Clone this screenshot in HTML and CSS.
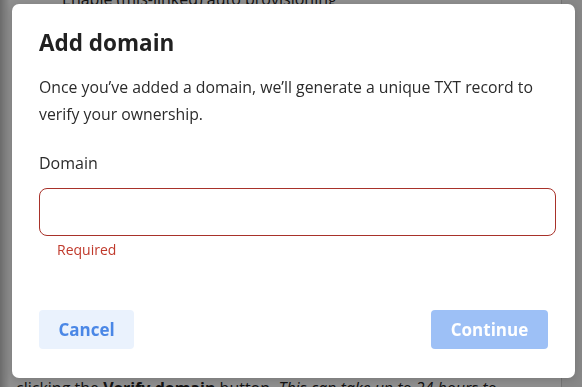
FILE: index.html
```html
<!DOCTYPE html>
<html>
<head>
<meta charset="utf-8">
<link rel="stylesheet" href="styles.css">
</head>
<body>
<div class="page">
  <div class="card">
    <p class="bg-top">Enable (mis-linked) auto provisioning</p>
    <div class="bg-spacer"></div>
    <p class="bg-bottom">clicking the <b>Verify domain</b> button. <i>This can take up to 24 hours to</i></p>
  </div>
</div>
<div class="overlay"></div>
<div class="modal">
  <h1 class="title">Add domain</h1>
  <p class="desc">Once you’ve added a domain, we’ll generate a unique TXT record to verify your ownership.</p>
  <label class="label">Domain</label>
  <div class="input"></div>
  <div class="error">Required</div>
  <div class="actions">
    <button class="btn btn-cancel">Cancel</button>
    <button class="btn btn-continue">Continue</button>
  </div>
</div>
</body>
</html>
```
FILE: styles.css
```css
html, body {
  margin: 0;
  padding: 0;
  width: 582px;
  height: 387px;
  overflow: hidden;
  font-family: "Open Sans", "Noto Sans", sans-serif;
}
.page {
  width: 582px;
  height: 387px;
  background: #f2f2f2;
  display: flex;
}
.card {
  width: 562px;
  height: 387px;
  background: #fff;
  border-right: 1px solid #d0d0d0;
  box-sizing: border-box;
  display: flex;
  flex-direction: column;
  padding-left: 16px;
}
.bg-top {
  margin: -12px 0 0 46px;
  font-size: 16px;
  color: #222;
}
.bg-spacer { flex: 1; }
.bg-bottom {
  margin: 0 0 -12px 0;
  font-size: 16px;
  color: #222;
}
.overlay {
  position: fixed;
  inset: 0;
  background: linear-gradient(to right, rgba(0,0,0,0.58) 0px, rgba(0,0,0,0.44) 10px, rgba(0,0,0,0.44) 100%);
}
.modal {
  position: absolute;
  left: 12px;
  top: 4px;
  width: 563px;
  height: 374px;
  box-sizing: border-box;
  background: #fff;
  border-radius: 7px;
  padding: 24px 27px 0 27px;
  display: flex;
  flex-direction: column;
  box-shadow: 0 2px 8px rgba(0,0,0,0.15);
}
.title {
  margin: 0;
  font-size: 22.5px;
  line-height: 30px;
  font-weight: 700;
  color: #212121;
}
.desc {
  margin: 16px 0 0 0;
  font-size: 15.8px;
  line-height: 27px;
  color: #2b2b2b;
}
.label {
  margin-top: 25px;
  font-size: 16px;
  line-height: 20px;
  color: #2b2b2b;
}
.input {
  margin-top: 15px;
  width: calc(100% + 8px);
  height: 48px;
  box-sizing: border-box;
  border: 1px solid #a8322a;
  border-radius: 8px;
}
.error {
  margin: 4px 0 0 18px;
  font-size: 14px;
  line-height: 20px;
  color: #c0392b;
}
.actions {
  margin-top: 50px;
  display: flex;
  justify-content: space-between;
}
.btn {
  height: 39px;
  border: none;
  border-radius: 4px;
  font-family: "Open Sans", "Noto Sans", sans-serif;
  font-size: 17px;
  font-weight: 700;
  padding: 0;
}
.btn-cancel {
  width: 95px;
  background: #eaf2fd;
  color: #4a87e6;
}
.btn-continue {
  width: 117px;
  background: #9dc0f6;
  color: #fff;
}
```
